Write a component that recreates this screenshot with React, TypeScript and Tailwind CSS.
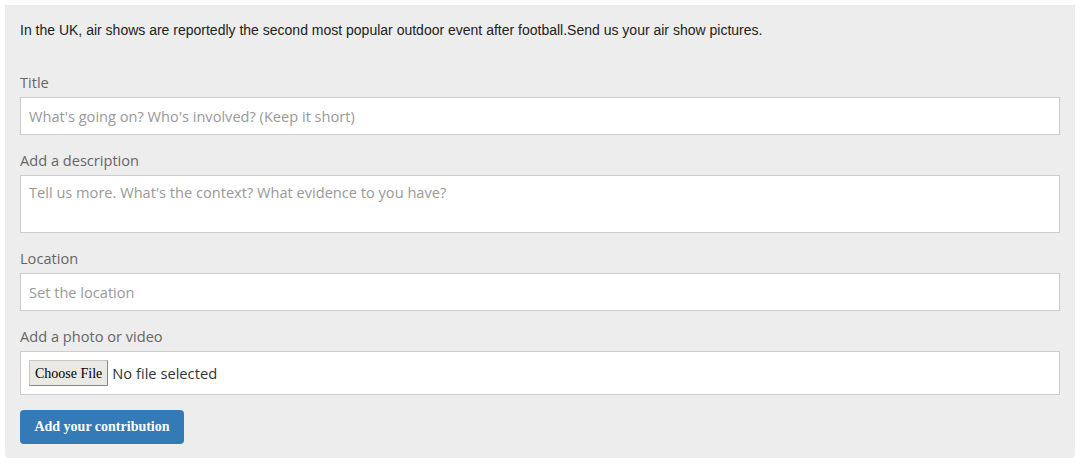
import React from "react";

export default function App() {
  const label = "block h-5 leading-5 text-[14.6px] text-[#666] mb-[5px]";
  const sans = { fontFamily: '"Open Sans", "Noto Sans", sans-serif' };
  const input =
    "block w-full h-[38px] border border-[#ccc] bg-white px-2 text-[14.6px] text-[#333] placeholder:text-[#999] outline-none";
  return (
    <div className="w-[1080px] h-[464px] bg-white pt-[5px] px-[5px]">
      <div className="bg-[#ededed] rounded-b-[4px] px-[15px] pt-[15px] pb-[14px]">
        <p
          className="h-5 leading-5 text-[14px] text-[#222]"
          style={{ fontFamily: '"Liberation Sans", Arial, sans-serif' }}
        >
          In the UK, air shows are reportedly the second most popular outdoor event after football.Send us your air show pictures.
        </p>
        <form className="mt-[32px]" style={sans} onSubmit={(e) => e.preventDefault()}>
          <label className={label}>Title</label>
          <input className={input} style={sans} placeholder="What's going on? Who's involved? (Keep it short)" />
          <label className={label + " mt-[15px]"}>Add a description</label>
          <textarea
            className="block w-full h-[58px] border border-[#ccc] bg-white px-2 py-[6px] text-[14.6px] text-[#333] placeholder:text-[#999] outline-none resize-none"
            style={sans}
            placeholder="Tell us more. What's the context? What evidence to you have?"
          />
          <label className={label + " mt-[15px]"}>Location</label>
          <input className={input} style={sans} placeholder="Set the location" />
          <label className={label + " mt-[15px]"}>Add a photo or video</label>
          <div className="flex items-center h-[44px] border border-[#ccc] bg-white pl-2">
            <span
              className="inline-flex items-center h-[26px] px-[5px] bg-[#ebe9e4] border border-[#c8c6c0] border-b-[#888] border-r-[#888] text-[14px] text-black"
              style={{ fontFamily: '"Liberation Serif", "Times New Roman", serif' }}
            >
              Choose File
            </span>
            <span className="ml-[4px] text-[14.7px] text-[#333]">No file selected</span>
          </div>
          <button
            type="submit"
            className="block mt-[15px] h-[34px] w-[164px] rounded-[4px] bg-[#337ab7] text-white text-[14px] font-bold whitespace-nowrap leading-[34px]"
            style={{ fontFamily: '"Liberation Serif", Georgia, serif' }}
          >
            Add your contribution
          </button>
        </form>
      </div>
    </div>
  );
}
